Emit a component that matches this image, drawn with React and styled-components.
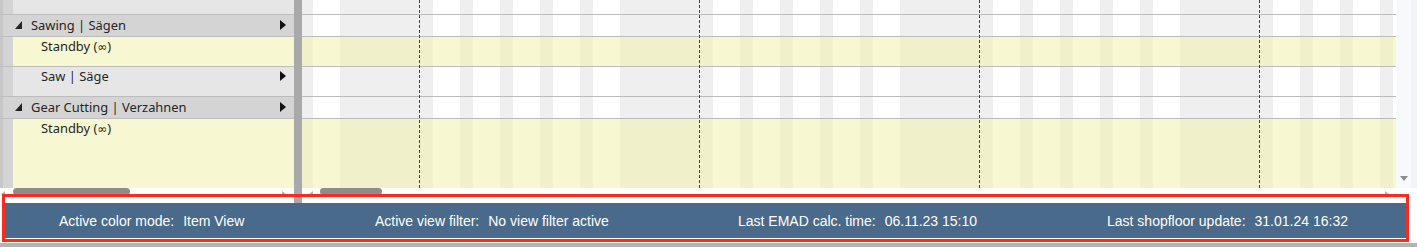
import React from 'react';
import styled, { createGlobalStyle } from 'styled-components';

const Global = createGlobalStyle`
  html, body { margin: 0; padding: 0; background: #fff; }
  body { width: 1417px; height: 247px; overflow: hidden; }
`;

const Page = styled.div`
  position: relative;
  width: 1417px;
  height: 247px;
  display: flex;
  flex-direction: column;
  background: #fff;
  font-family: "Noto Sans", "Open Sans", sans-serif;
`;

const Main = styled.div`
  display: flex;
  height: 203px;
`;

/* ---------- tree ---------- */
const TreePanel = styled.div`
  width: 294px;
  display: flex;
  flex-direction: column;
`;

const TreeBody = styled.div`
  height: 188px;
  display: flex;
  flex-direction: column;
  background: #d4d4d4;
  box-shadow: inset 3px 0 0 #c7c7c7;
  overflow: hidden;
`;

const TreeRow = styled.div`
  box-sizing: border-box;
  height: ${p => p.$h}px;
  flex: none;
  display: flex;
  border-bottom: ${p => (p.$last ? 'none' : '1px solid #bdbdbd')};
`;

const GroupCell = styled.div`
  flex: 1;
  display: flex;
  align-items: center;
  padding: 0 8px 1px 15px;
  font-size: 12.9px;
  color: #262626;
`;

const ChildCell = styled.div`
  flex: 1;
  margin-left: 13px;
  display: flex;
  align-items: flex-start;
  padding: 0 8px 0 28px;
  line-height: 18px;
  font-size: 12.9px;
  color: #262626;
  background: ${p => (p.$standby ? '#f7f7d1' : '#e6e6e6')};
`;

const Label = styled.span`
  flex: 1;
  white-space: nowrap;
`;

const Infinity = styled.span`
  font-family: "DejaVu Sans", sans-serif;
  font-size: 12px;
`;

const ExpandIcon = styled.svg`
  width: 7px;
  height: 8px;
  margin-right: 9px;
  flex: none;
`;

const NavArrow = styled.svg`
  width: 6px;
  height: 10px;
  flex: none;
  margin-top: ${p => (p.$top ? '4px' : '0')};
`;

/* ---------- splitter ---------- */
const Splitter = styled.div`
  width: 8px;
  flex: none;
  background: #a9a9a9;
`;

/* ---------- chart ---------- */
const ChartPanel = styled.div`
  flex: 1;
  display: flex;
  flex-direction: column;
  min-width: 0;
`;

const ChartTop = styled.div`
  height: 188px;
  display: flex;
`;

const ChartBody = styled.div`
  position: relative;
  flex: 1;
  overflow: hidden;
  background: #fff;
`;

const WeekLayer = styled.div`
  position: absolute;
  top: 0;
  bottom: 0;
  left: -162px;
  display: flex;
`;

const Week = styled.div`
  position: relative;
  display: flex;
  width: 280px;
  flex: none;
  &::before {
    content: '';
    position: absolute;
    left: -1px;
    top: 0;
    bottom: 0;
    z-index: 2;
    border-left: 1px dashed #444;
  }
`;

const Day = styled.div`
  width: 40px;
  flex: none;
  background: ${p =>
    p.$weekend
      ? '#efefef'
      : 'linear-gradient(to right, #efefef 0 13px, #ffffff 13px 40px)'};
`;

const ChartRows = styled.div`
  position: relative;
  z-index: 1;
  display: flex;
  flex-direction: column;
`;

const ChartRow = styled.div`
  box-sizing: border-box;
  height: ${p => p.$h}px;
  flex: none;
  border-bottom: ${p => (p.$last ? 'none' : '1px solid #bcbcbc')};
  background: ${p => (p.$standby ? 'rgba(241, 241, 175, 0.5625)' : 'transparent')};
`;

const VScroll = styled.div`
  width: 21px;
  flex: none;
  display: flex;
  flex-direction: column;
  align-items: flex-start;
  padding: 176px 0 0 4px;
  box-sizing: border-box;
  background: linear-gradient(to right, #f8f9fb 0 15px, #f2f3f6 15px);
`;

const DownArrow = styled.div`
  width: 0;
  height: 0;
  border-left: 4px solid transparent;
  border-right: 4px solid transparent;
  border-top: 5px solid #8d8d8d;
`;

const HScroll = styled.div`
  height: 15px;
  display: flex;
  align-items: flex-start;
  padding: ${p => p.$pad};
  box-sizing: border-box;
  background: #fff;
`;

const ScrollArrow = styled.div`
  width: 0;
  height: 0;
  margin-top: 3px;
  border-top: 3.5px solid transparent;
  border-bottom: 3.5px solid transparent;
  ${p =>
    p.$dir === 'left'
      ? 'border-right: 4px solid #b3b3b3;'
      : 'border-left: 4px solid #b3b3b3;'}
`;

const Thumb = styled.div`
  height: 7px;
  width: ${p => p.$w}px;
  margin-left: ${p => p.$ml}px;
  border-radius: 4px;
  background: #8c8c8c;
`;

const Spring = styled.div`
  flex: 1;
`;

/* ---------- status bar ---------- */
const StatusBar = styled.div`
  height: 35px;
  margin: 0 9px 0 2px;
  display: flex;
  align-items: center;
  padding-left: 57px;
  background: #4a6a8b;
  color: #fff;
  font-family: "Liberation Sans", Arial, sans-serif;
  font-size: 14px;
`;

const StatusItem = styled.div`
  width: ${p => (p.$w ? `${p.$w}px` : 'auto')};
  flex: none;
  display: flex;
  gap: 9px;
  white-space: nowrap;
`;

const Gap = styled.div`
  height: 5px;
  background: #fff;
`;

const BottomEdge = styled.div`
  height: 4px;
  background: #b3b3b3;
`;

const Highlight = styled.div`
  position: absolute;
  left: 2px;
  top: 194px;
  width: 1407px;
  height: 48px;
  box-sizing: border-box;
  border: 3px solid #ff2a1a;
  pointer-events: none;
`;

const rows = [
  { kind: 'child', h: 15, label: '' },
  { kind: 'group', h: 22, label: 'Sawing | Sägen' },
  { kind: 'standby', h: 30, label: 'Standby', inf: true },
  { kind: 'child', h: 30, label: 'Saw | Säge', arrow: true },
  { kind: 'group', h: 22, label: 'Gear Cutting | Verzahnen' },
  { kind: 'standby', h: 69, label: 'Standby', inf: true, last: true },
];

const status = [
  { label: 'Active color mode:', value: 'Item View', w: 316 },
  { label: 'Active view filter:', value: 'No view filter active', w: 363 },
  { label: 'Last EMAD calc. time:', value: '06.11.23 15:10', w: 369 },
  { label: 'Last shopfloor update:', value: '31.01.24 16:32' },
];

const weeks = [0, 1, 2, 3, 4, 5];
const days = [false, false, false, false, false, true, true];

const Expand = () => (
  <ExpandIcon viewBox="0 0 7 8">
    <polygon points="7,0 7,8 0,8" fill="#222" />
  </ExpandIcon>
);

const Right = ({ top }) => (
  <NavArrow viewBox="0 0 6 10" $top={top}>
    <polygon points="0,0 6,5 0,10" fill="#111" />
  </NavArrow>
);

export default function App() {
  return (
    <>
      <Global />
      <Page>
        <Main>
          <TreePanel>
            <TreeBody>
              {rows.map((r, i) => (
                <TreeRow key={i} $h={r.h} $last={r.last}>
                  {r.kind === 'group' ? (
                    <GroupCell>
                      <Expand />
                      <Label>{r.label}</Label>
                      <Right />
                    </GroupCell>
                  ) : (
                    <ChildCell $standby={r.kind === 'standby'}>
                      <Label>
                        {r.label}
                        {r.inf && (
                          <>
                            {' ('}
                            <Infinity>∞</Infinity>
                            {')'}
                          </>
                        )}
                      </Label>
                      {r.arrow && <Right top />}
                    </ChildCell>
                  )}
                </TreeRow>
              ))}
            </TreeBody>
            <HScroll $pad="0 8px 0 1px">
              <ScrollArrow $dir="left" />
              <Thumb $ml={8} $w={117} />
              <Spring />
              <ScrollArrow $dir="right" />
            </HScroll>
          </TreePanel>
          <Splitter />
          <ChartPanel>
            <ChartTop>
              <ChartBody>
                <WeekLayer>
                  {weeks.map(w => (
                    <Week key={w}>
                      {days.map((we, d) => (
                        <Day key={d} $weekend={we} />
                      ))}
                    </Week>
                  ))}
                </WeekLayer>
                <ChartRows>
                  {rows.map((r, i) => (
                    <ChartRow
                      key={i}
                      $h={r.h}
                      $last={r.last}
                      $standby={r.kind === 'standby'}
                    />
                  ))}
                </ChartRows>
              </ChartBody>
              <VScroll>
                <DownArrow />
              </VScroll>
            </ChartTop>
            <HScroll $pad="0 28px 0 7px">
              <ScrollArrow $dir="left" />
              <Thumb $ml={7} $w={62} />
              <Spring />
              <ScrollArrow $dir="right" />
            </HScroll>
          </ChartPanel>
        </Main>
        <StatusBar>
          {status.map(s => (
            <StatusItem key={s.label} $w={s.w}>
              <span>{s.label}</span>
              <span>{s.value}</span>
            </StatusItem>
          ))}
        </StatusBar>
        <Gap />
        <BottomEdge />
        <Highlight />
      </Page>
    </>
  );
}
